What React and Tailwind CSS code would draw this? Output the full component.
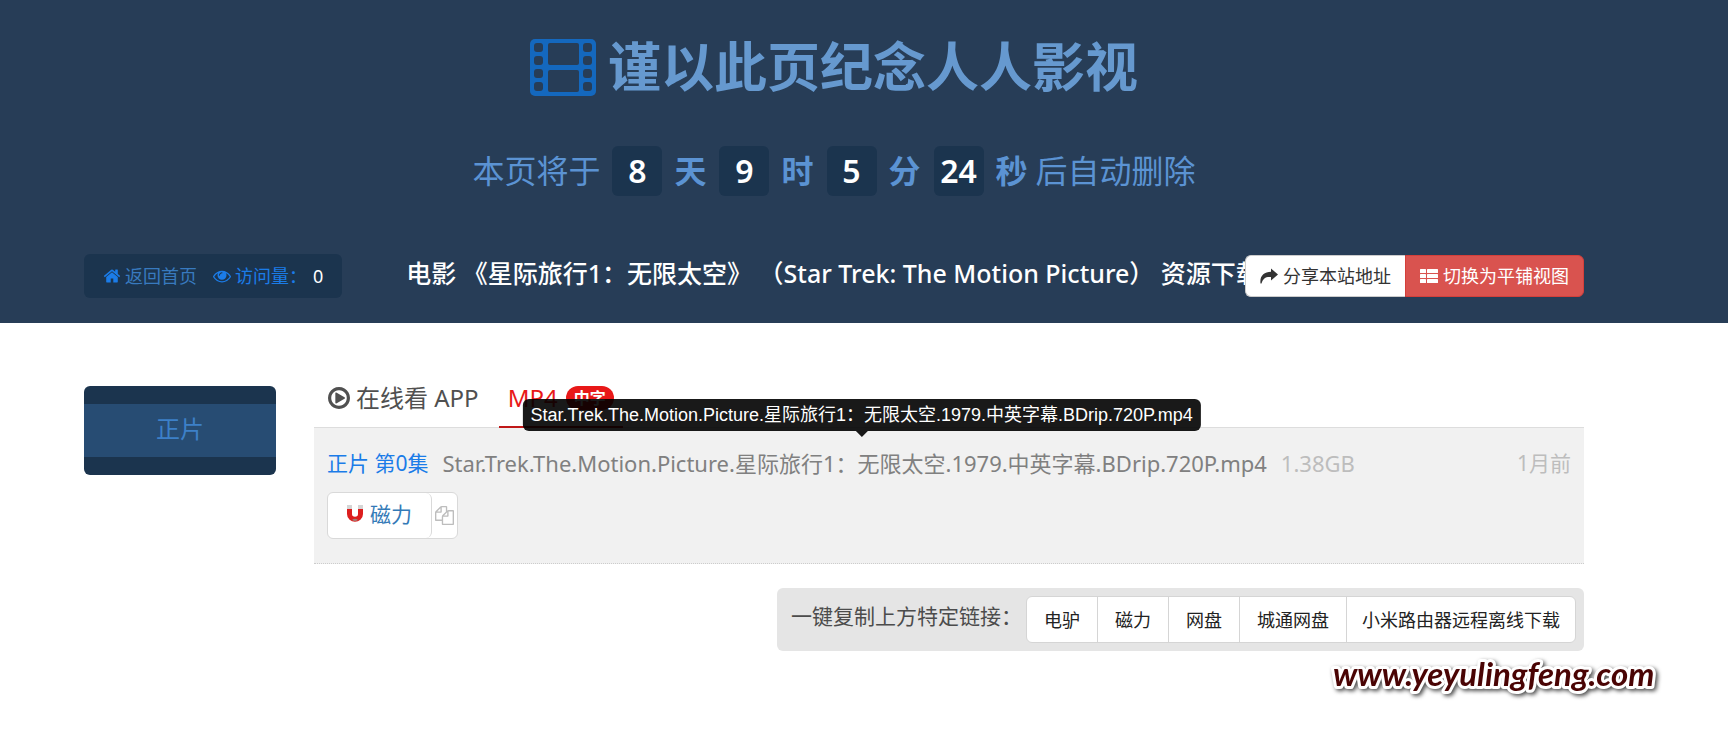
import React from 'react';

const FILE_NAME = 'Star.Trek.The.Motion.Picture.星际旅行1：无限太空.1979.中英字幕.BDrip.720P.mp4';

const COUNTDOWN = [
  { value: '8', unit: '天' },
  { value: '9', unit: '时' },
  { value: '5', unit: '分' },
  { value: '24', unit: '秒' },
];

const COPY_TYPES = ['电驴', '磁力', '网盘', '城通网盘', '小米路由器远程离线下载'];

const FilmIcon = () => (
  <svg viewBox="0 0 66 57" className="h-[57px] w-[66px]" fill="none" aria-hidden="true">
    <mask id="film-holes">
      <rect width="66" height="57" rx="5" fill="white" />
      {[4, 17, 30, 43].map(y => (
        <React.Fragment key={y}>
          <rect x="4" y={y} width="9" height="9" rx="3" fill="black" />
          <rect x="53" y={y} width="9" height="9" rx="3" fill="black" />
        </React.Fragment>
      ))}
      <rect x="18" y="4" width="31" height="22" rx="2" fill="black" />
      <rect x="18" y="31" width="31" height="22" rx="2" fill="black" />
    </mask>
    <rect width="66" height="57" fill="#1468be" mask="url(#film-holes)" />
  </svg>
);

const HomeIcon = () => (
  <svg viewBox="0 0 1792 1792" className="size-[18px]" fill="currentColor" aria-hidden="true">
    <path d="M1472 992v480q0 26-19 45t-45 19h-384v-384h-256v384h-384q-26 0-45-19t-19-45v-480q0-1 .5-3t.5-3l575-474 575 474q1 2 1 6zm223-69l-62 74q-8 9-21 11h-3q-13 0-21-7l-692-577-692 577q-12 8-24 7-13-2-21-11l-62-74q-8-10-7-23.5t11-21.5l719-599q32-26 76-26t76 26l244 204v-195q0-14 9-23t23-9h192q14 0 23 9t9 23v408l219 182q10 8 11 21.5t-7 23.5z" />
  </svg>
);

const EyeIcon = () => (
  <svg viewBox="0 0 1792 1792" className="size-[18px]" fill="currentColor" aria-hidden="true">
    <path d="M1664 960q-152-236-381-353 61 104 61 225 0 185-131.5 316.5t-316.5 131.5-316.5-131.5-131.5-316.5q0-121 61-225-229 117-381 353 133 205 333.5 326.5t434.5 121.5 434.5-121.5 333.5-326.5zm-720-384q0-20-14-34t-34-14q-125 0-214.500 89.500t-89.500 214.500q0 20 14 34t34 14 34-14 14-34q0-86 61-147t147-61q20 0 34-14t14-34zm848 384q0 34-20 69-140 230-376.500 368.500t-499.500 138.500-499.500-139-376.500-368q-20-35-20-69t20-69q140-229 376.500-368t499.500-139 499.500 139 376.500 368q20 35 20 69z" />
  </svg>
);

const ShareIcon = () => (
  <svg viewBox="0 0 18 16" className="h-4 w-[18px]" fill="currentColor" aria-hidden="true">
    <path d="M11 0.500 18 6.500 11 12.500V9C6 8.500 3 10 1.500 15.500H0.500C-0.500 8 4 3.800 11 3.800Z" />
  </svg>
);

const ListIcon = () => (
  <svg viewBox="0 0 18 15" className="h-[15px] w-[18px]" fill="currentColor" aria-hidden="true">
    {[0, 5, 10].map(y => (
      <React.Fragment key={y}>
        <rect x="0" y={y} width="6" height="4" rx="0.500" />
        <rect x="7" y={y} width="11" height="4" rx="0.500" />
      </React.Fragment>
    ))}
  </svg>
);

const PlayIcon = () => (
  <svg viewBox="0 128 1536 1536" className="size-[22px]" fill="currentColor" aria-hidden="true">
    <path d="M1184 896q0 37-32 55l-544 320q-15 9-32 9-16 0-32-8-32-19-32-56v-640q0-37 32-56 33-18 64 1l544 320q32 18 32 55zm128 0q0-148-73-273t-198-198-273-73-273 73-198 198-73 273 73 273 198 198 273 73 273-73 198-198 73-273zm224 0q0 209-103 385.500t-279.500 279.500-385.500 103-385.500-103-279.500-279.500-103-385.500 103-385.500 279.500-279.500 385.500-103 385.500 103 279.500 279.500 103 385.500z" />
  </svg>
);

const MagnetIcon = () => (
  <svg viewBox="0 0 18 18" className="size-[18px]" fill="none" aria-hidden="true">
    <path d="M3.500 4V9C3.500 16 14.500 16 14.500 9V4" stroke="#dc1e1e" strokeWidth="5" />
    <path d="M1 0H6V4H1ZM12 0H17V4H12Z" fill="#d5d5d5" />
    <path d="M6 15Q9 12.500 12 15Q9 17 6 15Z" fill="#a08078" />
  </svg>
);

const CopyIcon = () => (
  <svg viewBox="0 0 1792 1792" className="size-[19px]" fill="currentColor" aria-hidden="true">
    <path d="M1696 384q40 0 68 28t28 68v1216q0 40-28 68t-68 28h-960q-40 0-68-28t-28-68v-288h-544q-40 0-68-28t-28-68v-672q0-40 20-88t48-76l408-408q28-28 76-48t88-20h416q40 0 68 28t28 68v328q68-40 128-40h416zm-544 213l-299 299h299v-299zm-640-384l-299 299h299v-299zm196 647l316-316v-416h-384v416q0 40-28 68t-68 28h-416v640h512v-256q0-40 20-88t48-76zm956 804v-1152h-384v416q0 40-28 68t-68 28h-416v640h896z" />
  </svg>
);

const Header = () => (
  <header className="bg-[#273d57] pb-[25px] pr-[60px] pt-7">
    <h1 className="flex h-[78px] items-center justify-center gap-3 whitespace-nowrap text-[53px] font-bold leading-[78px] text-[#6699cf]">
      <FilmIcon />
      <span>谨以此页纪念人人影视</span>
    </h1>

    <div className="mt-10 flex items-center justify-center whitespace-nowrap text-[32px] leading-[50px] text-[#5b93d3]">
      <span className="mr-3">本页将于</span>
      {COUNTDOWN.map((c, i) => (
        <React.Fragment key={c.unit}>
          <span className="h-[50px] w-[50px] rounded-md bg-[#1b344e] text-center font-semibold text-white">{c.value}</span>
          <span className={`ml-3 font-bold ${i === COUNTDOWN.length - 1 ? 'mr-2' : 'mr-[13px]'}`}>{c.unit}</span>
        </React.Fragment>
      ))}
      <span>后自动删除</span>
    </div>

    <div className="mx-auto mt-[58px] flex max-w-[1500px] items-center">
      <div className="flex h-11 shrink-0 items-center whitespace-nowrap rounded-md bg-[#1b344e] px-[19px] text-lg text-[#1b7ce8]">
        <a href="#" className="flex items-center gap-1">
          <HomeIcon />
          <span className="text-[#387abf]">返回首页</span>
        </a>
        <span className="ml-4 flex items-center gap-1">
          <EyeIcon />
          访问量：
        </span>
        <span className="ml-[6px] text-white">0</span>
      </div>
      <h2 className="ml-16 min-w-0 flex-1 overflow-hidden whitespace-nowrap pb-[6px] text-[25px] font-medium leading-9 text-white">
        电影 《星际旅行1：无限太空》 （Star Trek: The Motion Picture） 资源下载
      </h2>
      <div className="flex h-[42px] shrink-0 whitespace-nowrap text-lg">
        <button type="button" className="flex items-center gap-[5px] rounded-l-md border border-r-0 border-[#cccccc] bg-white px-[14px] text-[#333333]">
          <ShareIcon />
          分享本站地址
        </button>
        <button type="button" className="flex items-center gap-[5px] rounded-r-md border border-[#d43f3a] bg-[#d9534f] px-[14px] text-white">
          <ListIcon />
          切换为平铺视图
        </button>
      </div>
    </div>
  </header>
);

const Tooltip = () => (
  <div role="tooltip" className="absolute bottom-full left-1/2 mb-4 -translate-x-1/2 whitespace-nowrap rounded-md bg-black/90 px-2 font-['Liberation_Sans','Noto_Sans_CJK_SC',sans-serif] text-lg leading-8 text-white">
    {FILE_NAME}
    <span className="absolute left-1/2 top-full -translate-x-1/2 border-x-[6px] border-t-[6px] border-x-transparent border-t-black/90" />
  </div>
);

const Resources = () => (
  <section className="min-w-0 flex-1">
    <nav className="flex h-[42px] items-start whitespace-nowrap border-b border-[#dddddd] text-2xl leading-6">
      <a href="#" className="flex items-center gap-[6px] px-[14px] text-[#505050]">
        <PlayIcon />
        在线看 APP
      </a>
      <a href="#" className="ml-[6px] flex h-[42px] items-start gap-2 border-b-2 border-[#c01818] px-[9px] text-[#e81818]">
        MP4
        <span className="rounded-full bg-[#e81818] px-2 text-base font-bold leading-6 text-white">中字</span>
      </a>
    </nav>

    <div className="border-b border-dotted border-[#cccccc] bg-[#f1f1f1] px-[13px] pb-6 pt-[19px] text-[21px] leading-8">
      <div className="flex whitespace-nowrap">
        <a href="#" className="text-[#1b7ce8]">正片 第0集</a>
        <span className="relative ml-[14px] pr-[14px] text-[22px] text-[#808080]">
          {FILE_NAME}
          <Tooltip />
        </span>
        <span className="text-[22px] text-[#bdbdbd]">1.38GB</span>
        <span className="ml-auto text-[#bdbdbd]">1月前</span>
      </div>
      <div className="mt-[13px] flex h-[47px] w-fit rounded-md border border-[#d9d9d9] bg-white">
        <a href="#" className="flex items-center gap-[6px] rounded-md border-r border-[#d9d9d9] pb-[3px] pl-[18px] pr-[19px] text-[#337ab7]">
          <MagnetIcon />
          磁力
        </a>
        <button type="button" aria-label="复制" className="px-[3px] text-[#bdbdbd]">
          <CopyIcon />
        </button>
      </div>
    </div>

    <div className="ml-auto mt-6 flex w-fit items-center whitespace-nowrap rounded-md bg-[#e5e5e5] p-2 pl-[14px]">
      <span className="pb-[6px] text-[21px] text-[#4c4c4c]">一键复制上方特定链接：</span>
      <div className="ml-1 flex h-[47px] divide-x divide-[#d5d5d5] rounded-md border border-[#d5d5d5] bg-white text-lg text-[#222222]">
        {COPY_TYPES.map(t => (
          <button key={t} type="button" className="px-[17px] last:px-[15px]">{t}</button>
        ))}
      </div>
    </div>
  </section>
);

const Watermark = () => (
  <svg viewBox="0 0 340 50" className="absolute right-[64px] top-[650px] h-[50px] w-[340px] overflow-visible" aria-hidden="true">
    <text
      x="9"
      y="36"
      fontSize="33"
      fill="#4a0404"
      stroke="#ffffff"
      strokeWidth="6"
      strokeLinejoin="round"
      paintOrder="stroke"
      className="font-['Lato',sans-serif] font-bold italic drop-shadow-[2px_2px_2px_rgba(0,0,0,0.7)]"
    >
      www.yeyulingfeng.com
    </text>
  </svg>
);

const App = () => (
  <div className="relative min-h-screen overflow-hidden bg-white font-['Noto_Sans','Noto_Sans_CJK_SC',sans-serif]">
    <Header />
    <main className="pr-[60px] pt-[63px]">
      <div className="mx-auto flex max-w-[1500px] items-start gap-[38px]">
        <aside className="w-48 shrink-0 overflow-hidden rounded-md bg-[#1b344e] py-[18px]">
          <a href="#" className="block bg-[#274c73] pb-[3px] text-center text-2xl leading-[50px] text-[#3d80c8]">正片</a>
        </aside>
        <Resources />
      </div>
    </main>
    <Watermark />
  </div>
);

export default App;
